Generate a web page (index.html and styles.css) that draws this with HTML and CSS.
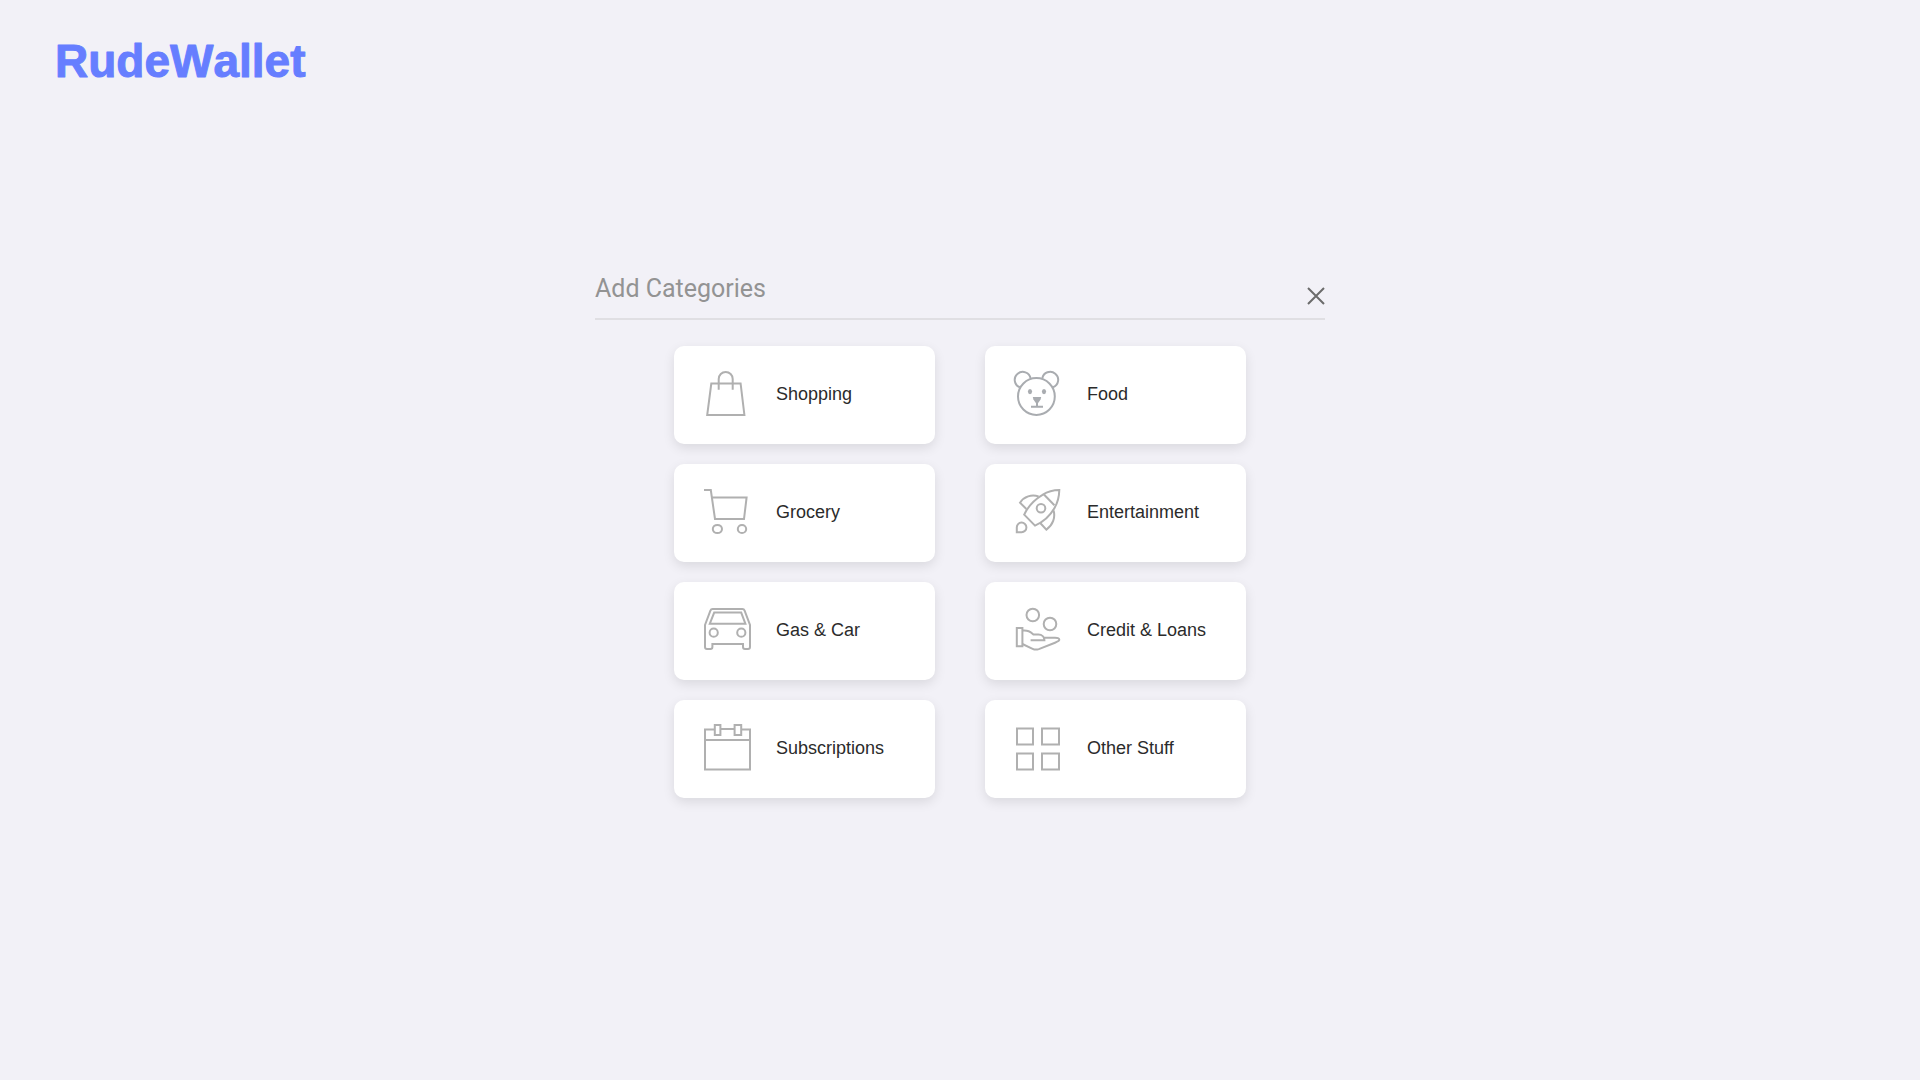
FILE: index.html
```html
<!DOCTYPE html>
<html lang="en">
<head>
    <meta charset="UTF-8">
    <meta name="viewport" content="width=device-width, initial-scale=1.0">
    <title>RudeWallet</title>
    <link rel="stylesheet" href="styles.css">
</head>
<body>
    <header>
        <a href="#" class="logo">
            <svg width="264" height="64"><text x="3" y="53">RudeWallet</text></svg>
        </a>
    </header>
    <main>
        <form class="search">
            <input type="text" id="category" placeholder="Add Categories" aria-label="Add Categories">
            <button type="reset" class="close" aria-label="Clear">
                <svg width="18" height="18" viewBox="0 0 18 18"><path d="M1 1L17 17M17 1L1 17"/></svg>
            </button>
        </form>
        <div class="categories">
            <button class="card">
                <svg class="icon" viewBox="0 0 48 48">
                    <path d="M7.3 13.5H36.6L40.4 45H3.2Z"/>
                    <path d="M14.7 19.8V9a7 7 0 0 1 14 0V19.8"/>
                </svg>
                <span>Shopping</span>
            </button>
            <button class="card">
                <svg class="icon bear" viewBox="0 0 48 48">
                    <circle cx="21.4" cy="26.5" r="18.4"/>
                    <path d="M4.8 17.3A8 8 0 1 1 15.6 8.4M27.3 8.4A8 8 0 1 1 38 17.3"/>
                    <path d="M16 36.8H28M22 33V36.8"/>
                    <g class="solid">
                        <ellipse cx="15" cy="21.6" rx="2.1" ry="2.6"/>
                        <ellipse cx="29" cy="21.6" rx="2.1" ry="2.6"/>
                        <path d="M17.8 27H26.2L25.6 29.6L22.8 33.6H21.2L18.4 29.6Z"/>
                    </g>
                </svg>
                <span>Food</span>
            </button>
            <button class="card">
                <svg class="icon" viewBox="0 0 48 48">
                    <path d="M0 2H6.8L11 31H40L42.6 9.4H8"/>
                    <ellipse cx="13.4" cy="41" rx="4.6" ry="4.1"/>
                    <ellipse cx="38" cy="41" rx="4.2" ry="4.1"/>
                </svg>
                <span>Grocery</span>
            </button>
            <button class="card">
                <svg class="icon" viewBox="0 0 48 48">
                    <path d="M44.3 2C38 2 32 4 27.5 6.8C19.5 11.5 13 18.5 9.2 26.6L20 37.6C28 34 35 28 39.5 20C42.7 14.5 44.2 8 44.3 2Z"/>
                    <path d="M28.7 6.2L39.4 17.2"/>
                    <circle cx="26" cy="20.3" r="4.3"/>
                    <path d="M23.6 8.4C16.5 6 9 8.5 5 14.7L11.4 21M38.6 22.5C40.5 29.5 38 37 31.4 41.6L25.2 35"/>
                    <path d="M1.8 44.2V39.6A4.8 4.8 0 1 1 6.6 44.2Z"/>
                </svg>
                <span>Entertainment</span>
            </button>
            <button class="card">
                <svg class="icon" viewBox="0 0 48 48">
                    <path d="M1 19L6.4 4.6Q7 3 8.6 3H38.4Q40 3 40.6 4.6L46 19V41Q46 43 44 43H41Q39 43 39 41V38H8.4V41Q8.4 43 6.4 43H3Q1 43 1 41Z"/>
                    <path d="M10.2 6.6H37.2L41.4 17.7H5.8Z"/>
                    <circle cx="9.7" cy="26.7" r="4.1"/>
                    <circle cx="37.3" cy="26.7" r="4.1"/>
                </svg>
                <span>Gas &amp; Car</span>
            </button>
            <button class="card">
                <svg class="icon" viewBox="0 0 48 48">
                    <circle cx="17.8" cy="9" r="6.3"/>
                    <circle cx="35" cy="18" r="6.3"/>
                    <path d="M1.8 22H7.4V40.3H1.8Z"/>
                    <path d="M7.4 24.6C13 24.2 15 25.4 18.4 28.4H23.4C27 28.4 29.4 31 29.4 34.3H15.6"/>
                    <path d="M28 31.7H40C43 31.7 44.3 32.6 44.3 33.8C44.3 34.8 42.5 35.7 40 36.7L23.8 43.1C21 44 20 43.9 17.6 42.8L7.4 38"/>
                </svg>
                <span>Credit &amp; Loans</span>
            </button>
            <button class="card">
                <svg class="icon" viewBox="0 0 48 48">
                    <path d="M10.8 5.6H1V45.6H46V5.6H37.2M16.4 5H30.4M1 16H46"/>
                    <path d="M10.8 1H16.4V11H10.8ZM30.6 1H37.2V11H30.6Z"/>
                </svg>
                <span>Subscriptions</span>
            </button>
            <button class="card">
                <svg class="icon" viewBox="0 0 48 48">
                    <path d="M2 4.6H18V20.6H2ZM27 4.6H44V20.6H27ZM2 29.6H18V45.6H2ZM27 29.6H44V45.6H27Z"/>
                </svg>
                <span>Other Stuff</span>
            </button>
        </div>
    </main>
</body>
</html>
```

FILE: styles.css
```css
* {
    box-sizing: border-box;
}

body {
    font-family: "Liberation Sans", Arial, sans-serif;
    min-height: 100vh;
    margin: 0;
    background-color: #f2f1f7;
    color: #2b2b2b;
}

header {
    display: flex;
    padding: 24px 52px 0;
}

.logo svg {
    display: block;
}

/* the round stroke softens the corners of the letters */
.logo text {
    font-size: 46px;
    font-weight: bold;
    font-kerning: none;
    fill: #667eff;
    stroke: #667eff;
    stroke-width: 1;
    stroke-linejoin: round;
}

main {
    width: 100%;
    max-width: 730px;
    margin: 0 auto;
    padding-top: 172px;
}

.search {
    display: flex;
    align-items: flex-end;
    height: 60px;
    border-bottom: 2px solid #e0dfe3;
}

.search input {
    flex: 1;
    height: 58px;
    padding: 0 0 2px;
    border: none;
    outline: none;
    background: none;
    font-family: Roboto, sans-serif;
    font-size: 25px;
    color: #2b2b2b;
}

.search input::placeholder {
    color: #939393;
    opacity: 1;
}

.close {
    margin-bottom: 13px;
    padding: 0;
    border: none;
    background: none;
    cursor: pointer;
}

.close svg {
    display: block;
    fill: none;
    stroke: #6b6b6b;
    stroke-width: 2;
}

.categories {
    display: grid;
    grid-template-columns: repeat(2, 261px);
    gap: 20px 50px;
    justify-content: center;
    margin-top: 26px;
}

.card {
    display: flex;
    align-items: center;
    gap: 24px;
    height: 98px;
    padding: 0 30px 2px;
    border: none;
    border-radius: 10px;
    background-color: #fff;
    box-shadow: 0 4px 12px rgba(0, 0, 0, 0.1);
    font-family: inherit;
    font-size: 18px;
    color: #2b2b2b;
    white-space: nowrap;
    cursor: pointer;
}

.icon {
    flex: none;
    width: 48px;
    height: 48px;
    overflow: visible;
    fill: none;
    stroke: #b0b0b0;
    stroke-width: 2;
}

.bear {
    stroke: #a9acb0;
}

.solid {
    fill: #a9acb0;
    stroke: none;
}
```
